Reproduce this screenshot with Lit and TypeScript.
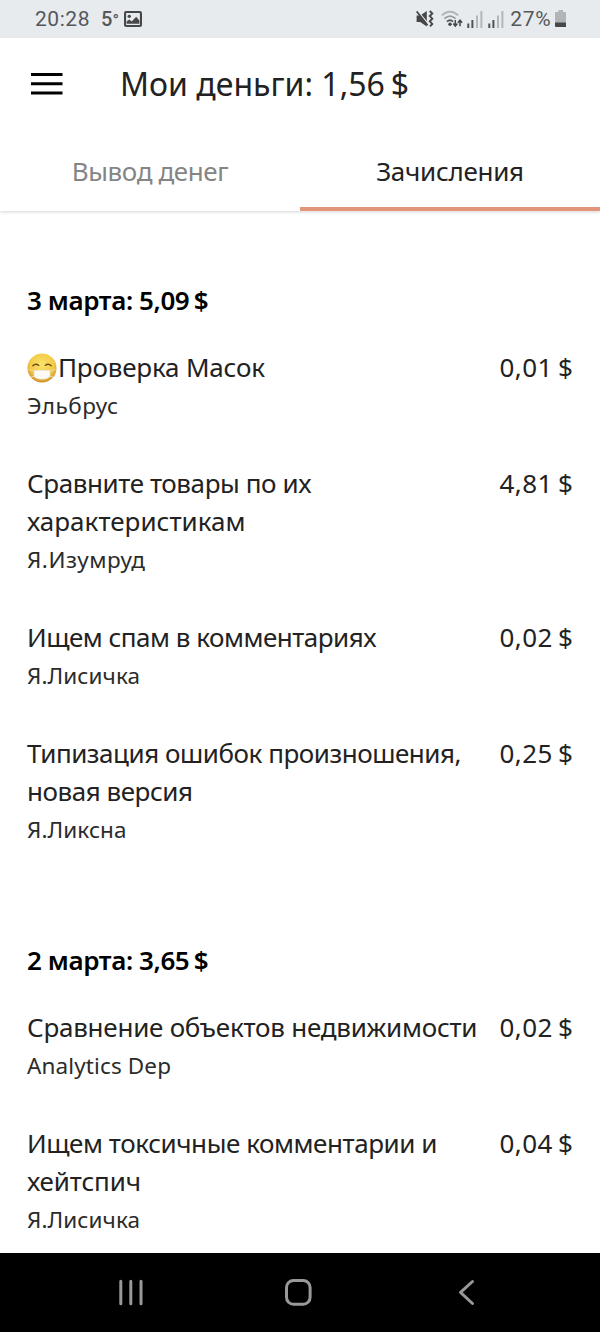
import { LitElement, html, css, svg } from "lit";
import { customElement, property } from "lit/decorators.js";

interface Line { text: string; width: number; emoji?: boolean }
interface Entry { lines: Line[]; project: Line; amount: string }
interface Day { title: string; entries: Entry[] }

const days: Day[] = [
  {
    title: "3 марта: 5,09 $",
    entries: [
      { lines: [{ text: "Проверка Масок", width: 207, emoji: true }], project: { text: "Эльбрус", width: 91 }, amount: "0,01 $" },
      { lines: [{ text: "Сравните товары по их", width: 284.5 }, { text: "характеристикам", width: 218.5 }], project: { text: "Я.Изумруд", width: 118 }, amount: "4,81 $" },
      { lines: [{ text: "Ищем спам в комментариях", width: 349.5 }], project: { text: "Я.Лисичка", width: 113 }, amount: "0,02 $" },
      { lines: [{ text: "Типизация ошибок произношения,", width: 434.5 }, { text: "новая версия", width: 166 }], project: { text: "Я.Ликсна", width: 99.5 }, amount: "0,25 $" },
    ],
  },
  {
    title: "2 марта: 3,65 $",
    entries: [
      { lines: [{ text: "Сравнение объектов недвижимости", width: 450.5 }], project: { text: "Analytics Dep", width: 144 }, amount: "0,02 $" },
      { lines: [{ text: "Ищем токсичные комментарии и", width: 410.5 }, { text: "хейтспич", width: 114 }], project: { text: "Я.Лисичка", width: 113 }, amount: "0,04 $" },
    ],
  },
];

/** A single line of text whose tracking is adjusted to span the given width. */
@customElement("fit-line")
class FitLine extends LitElement {
  @property() text = "";
  @property({ type: Number }) width = 0;

  static styles = css`
    :host { display: inline-block; white-space: nowrap; }
    .text { display: inline-block; white-space: pre; }
    .currency { word-spacing: -.08em; }
  `;

  updated() {
    const el = this.renderRoot.querySelector(".text") as HTMLElement;
    el.style.letterSpacing = "0px";
    const natural = el.getBoundingClientRect().width;
    el.style.letterSpacing = `${((this.width - natural) / Math.max(1, this.text.length - 1)).toFixed(3)}px`;
  }

  render() {
    const money = this.text.endsWith(" $");
    return html`<span class="text">${money
      ? html`${this.text.slice(0, -2)}<span class="currency"> $</span>`
      : this.text}</span>`;
  }
}

const maskEmoji = html`<svg class="emoji" width="30" height="30" viewBox="0 0 30 30">
  <defs>
    <radialGradient id="face" cx="50%" cy="38%" r="62%">
      <stop offset="0" stop-color="#fbe36c" /><stop offset=".65" stop-color="#f3cb48" /><stop offset="1" stop-color="#cf902c" />
    </radialGradient>
  </defs>
  <circle cx="15" cy="15" r="14.5" fill="url(#face)" />
  <path d="M1.3 16.5 8 18M28.7 16.5 22 18M4 24l5-1M26 24l-5-1" stroke="#eddca4" stroke-width="1" fill="none" />
  <path d="M7 17.6Q15 16.6 23 17.6V23Q21.5 26.2 15 26.2T7 23Z" fill="#fbfaf6" stroke="#e6dcc0" stroke-width=".6" />
  <path d="M5.8 12.8Q8.6 10 11.8 12.4M18.2 12.4Q21.4 10 24.2 12.8" fill="none" stroke="#6b4a14" stroke-width="1.3" stroke-linecap="round" />
</svg>`;

const bars = html`<svg width="16" height="17" viewBox="0 0 16 17">
  <path d="M1.3 12.5V17M5.4 9V17" stroke="#505355" stroke-width="2" />
  <path d="M10 4.5V17M14.4 0V17" stroke="#b4b7ba" stroke-width="2" />
</svg>`;

@customElement("status-bar")
class StatusBar extends LitElement {
  static styles = css`
    :host { display: flex; height: 38px; box-sizing: border-box; padding: 0 34px 0 35px; align-items: center; justify-content: space-between;
      background: #e8ebee; color: #55585a; font: 21px/38px Roboto, sans-serif; }
    .group { display: flex; align-items: center; height: 38px; }
    .temp { width: 18px; margin: 0 5px 0 11px; font-weight: 500; font-size: 20px; white-space: nowrap; }
    .degree { font-size: 17px; }
    .mute { margin-right: 7px; }
    .wifi { margin-right: 4px; }
    .first { display: flex; margin-right: 5px; }
    .second { display: flex; margin-right: 6px; }
    .pct { margin-right: 3px; }
    svg { display: block; }
  `;

  render() {
    return html`
      <div class="group">
        <fit-line .text=${"20:28"} .width=${54.5}></fit-line>
        <span class="temp">5<span class="degree">°</span></span>
        <svg width="18" height="16" viewBox="0 0 17 16" preserveAspectRatio="none">
          <rect x="1" y="1" width="15" height="14" rx="1" fill="none" stroke="#454749" stroke-width="2" />
          <circle cx="5" cy="5.3" r="1.6" fill="#454749" />
          <path d="M2.5 12.8V10.6L5 8.5l2.3 2 4.2-4.8 3 3.7v3.4Z" fill="#454749" />
        </svg>
      </div>
      <div class="group">
        <svg class="mute" width="18" height="18" viewBox="0 0 18 18">
          <path d="M.6 5.5h3.6L10.8 1v15.5L4.2 12H.6Z" fill="#454749" />
          <path d="M1.8 1 12.3 14" stroke="#e8ebee" stroke-width="1.2" />
          <path d="M.6 1.4 11.6 15.2" stroke="#454749" stroke-width="1.7" />
          <path d="m13.7 1 2.6 2.5-2.5 2.6 2.5 2.6-2.5 2.6 2.5 2.6-2.3 2.4" fill="none" stroke="#454749" stroke-width="1.9" />
        </svg>
        <svg class="wifi" width="22" height="18" viewBox="0 0 22 18" fill="none">
          <path d="M.8 5.4Q9 -2.2 17.2 5.4" stroke="#aeb1b4" stroke-width="1.8" />
          <path d="M3.5 8.6Q9 3.6 14.5 8.6" stroke="#96999b" stroke-width="1.8" />
          <path d="M5.9 11.6Q9 9 12.1 11.6" stroke="#55585a" stroke-width="1.8" />
          <circle cx="9" cy="14.3" r="1.7" fill="#454749" />
          <path d="M14.3 10v6M12.2 13.5l2.1 2.6 2.1-2.6M19 16.2v-6M16.9 12.7l2.1-2.6 2.1 2.6" stroke="#454749" stroke-width="1.5" />
        </svg>
        <span class="first">${bars}</span>
        <span class="second">${bars}</span>
        <fit-line class="pct" .text=${"27%"} .width=${40.5}></fit-line>
        <svg width="11.5" height="18" viewBox="0 0 12 18" preserveAspectRatio="none">
          <path d="M3.6 0h4.8v2H12v11H0V2h3.6Z" fill="#b2b5b8" />
          <path d="M0 12.5h12V16q0 1-1 1H1q-1 0-1-1Z" fill="#454749" />
        </svg>
      </div>
    `;
  }
}

@customElement("income-row")
class IncomeRow extends LitElement {
  @property({ attribute: false }) entry!: Entry;

  static styles = css`
    :host { display: flex; justify-content: space-between; align-items: flex-start; color: #222; font-size: 26px; line-height: 38px; }
    .line { display: flex; height: 38px; align-items: center; }
    .project { height: 38px; font-size: 22.5px; line-height: 40px; color: #2b2b2b; }
    .emoji { display: block; margin: 2px 1px 0 0; flex: none; }
    .amount { width: 73.5px; flex: none; }
  `;

  render() {
    const { lines, project, amount } = this.entry;
    return html`
      <div>
        ${lines.map((l) => html`<div class="line">${l.emoji ? maskEmoji : ""}<fit-line .text=${l.text} .width=${l.width}></fit-line></div>`)}
        <div class="project"><fit-line .text=${project.text} .width=${project.width}></fit-line></div>
      </div>
      <fit-line class="amount" .text=${amount} .width=${73.5}></fit-line>
    `;
  }
}

@customElement("app-root")
class AppRoot extends LitElement {
  static styles = css`
    :host { display: flex; flex-direction: column; height: 1332px; overflow: hidden; background: #fff; color: #222;
      font-family: "Noto Sans", "Open Sans", sans-serif; }
    status-bar { flex: none; }
    .header { display: flex; align-items: center; height: 92px; padding: 0 30px; gap: 57px; flex: none; font-size: 32px; line-height: 44px; }
    .tabs { display: grid; grid-template-columns: 1fr 1fr; height: 81px; flex: none; font-size: 26px; line-height: 38px;
      box-shadow: 0 2px 2px rgba(0, 0, 0, .1); text-align: center; }
    .tab { box-sizing: border-box; padding-top: 22px; color: #858585; background: #fff; }
    .active { color: #222; border-bottom: 4px solid #e2957a; }
    .list { flex: 1; min-height: 0; overflow: hidden; padding: 70px 27px 0 27px; display: flex; flex-direction: column; gap: 93px; }
    .day { display: flex; flex-direction: column; gap: 40px; flex: none; }
    .date { margin: 0 0 -11px; font-size: 26px; line-height: 38px; font-weight: 600; color: #000; }
    .nav { display: block; flex: none; background: #000; }
  `;

  render() {
    return html`
      <status-bar></status-bar>
      <header class="header">
        <svg width="33" height="24" viewBox="0 0 33 24"><path d="M1 2.5H32.5M1 11.8H32.5M1 21H32.5" stroke="#000" stroke-width="3" /></svg>
        <fit-line .text=${"Мои деньги: 1,56 $"} .width=${289}></fit-line>
      </header>
      <nav class="tabs">
        <div class="tab"><fit-line .text=${"Вывод денег"} .width=${157}></fit-line></div>
        <div class="tab active"><fit-line .text=${"Зачисления"} .width=${148}></fit-line></div>
      </nav>
      <main class="list">
        ${days.map((d) => html`<section class="day">
          <h2 class="date"><fit-line .text=${d.title} .width=${181.5}></fit-line></h2>
          ${d.entries.map((e) => html`<income-row .entry=${e}></income-row>`)}
        </section>`)}
      </main>
      <svg class="nav" width="600" height="79" viewBox="0 0 600 79" fill="none" stroke="#999" stroke-width="3" stroke-linecap="round" stroke-linejoin="round">
        ${svg`<path d="M120.8 28.2V50.8M130.8 28.2V50.8M141 28.2V50.8" />
        <rect x="286.5" y="27.5" width="23.6" height="23.8" rx="7" />
        <path d="M472.5 28.5 460.5 39.3 472.5 50.5" />`}
      </svg>
    `;
  }
}
